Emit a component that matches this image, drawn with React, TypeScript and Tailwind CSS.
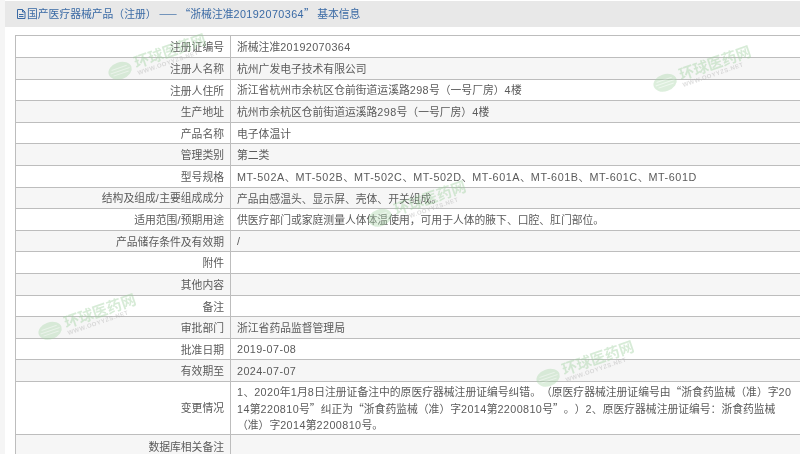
import React from "react";

function Mixed({ text }: { text: string }) {
  const parts = text.split(/([A-Za-z0-9\-\/]+)/);
  const wide = text.startsWith("MT-");
  return (
    <>
      {parts.map((p, i) =>
        i % 2 === 1 ? (
          <span
            key={i}
            className={
              wide
                ? "font-['Liberation_Sans',sans-serif] tracking-[0.56px]"
                : "font-['Liberation_Sans',sans-serif] tracking-[0.4px]"
            }
          >
            {p}
          </span>
        ) : (
          <span key={i}>{p}</span>
        ),
      )}
    </>
  );
}

const data: [string, string[], string][] = [
  ["注册证编号", ["浙械注准20192070364"], "h-[22px]"],
  ["注册人名称", ["杭州广发电子技术有限公司"], "h-[22px]"],
  ["注册人住所", ["浙江省杭州市余杭区仓前街道运溪路298号（一号厂房）4楼"], "h-[21px]"],
  ["生产地址", ["杭州市余杭区仓前街道运溪路298号（一号厂房）4楼"], "h-[22px]"],
  ["产品名称", ["电子体温计"], "h-[21px]"],
  ["管理类别", ["第二类"], "h-[22px]"],
  ["型号规格", ["MT-502A、MT-502B、MT-502C、MT-502D、MT-601A、MT-601B、MT-601C、MT-601D"], "h-[22px]"],
  ["结构及组成/主要组成成分", ["产品由感温头、显示屏、壳体、开关组成。"], "h-[21px]"],
  ["适用范围/预期用途", ["供医疗部门或家庭测量人体体温使用，可用于人体的腋下、口腔、肛门部位。"], "h-[22px]"],
  ["产品储存条件及有效期", ["/"], "h-[21px]"],
  ["附件", [], "h-[22px]"],
  ["其他内容", [], "h-[22px]"],
  ["备注", [], "h-[21px]"],
  ["审批部门", ["浙江省药品监督管理局"], "h-[22px]"],
  ["批准日期", ["2019-07-08"], "h-[21px]"],
  ["有效期至", ["2024-07-07"], "h-[22px]"],
  [
    "变更情况",
    [
      "1、2020年1月8日注册证备注中的原医疗器械注册证编号纠错。（原医疗器械注册证编号由“浙食药监械（准）字20",
      "14第220810号”纠正为“浙食药监械（准）字2014第2200810号”。）2、原医疗器械注册证编号：浙食药监械",
      "（准）字2014第2200810号。",
    ],
    "h-[52px]",
  ],
  ["数据库相关备注", [], "h-[24px]"],
];

function Watermark({ className }: { className: string }) {
  return (
    <div className={`absolute pointer-events-none flex items-center gap-[3px] -rotate-[19deg] opacity-40 ${className}`}>
      <svg width="26" height="20" viewBox="0 0 26 20">
        <ellipse cx="13" cy="10" rx="12" ry="8.5" fill="#a9d6a9" />
        <path d="M5 7 H21 M3 10 H23 M5 13 H21" stroke="#d8eed8" strokeWidth="1" />
      </svg>
      <div className="flex flex-col leading-none text-[#9ccf9c]">
        <span className="text-[15px] font-bold leading-[16px]">环球医药网</span>
        <span className="text-[6px] font-bold tracking-[0.5px] text-[#aaa] font-['Liberation_Sans',sans-serif]">WWW.OOYYZS.NET</span>
      </div>
    </div>
  );
}

export default function App() {
  return (
    <div className="relative w-[800px] h-[454px] overflow-hidden bg-[#f5f5f5] font-['Noto_Sans_CJK_SC','Noto_Sans',sans-serif] text-[10.8px] text-[#5a5a5a] blur-[0.3px] [text-spacing-trim:space-all] [text-autospace:no-autospace]">
      <div className="ml-[5px] h-full bg-white pt-px">
        <div className="h-[26px] bg-[#e8e8e8] flex items-center pl-[10px] text-[#3a6aa5]">
          <svg width="12" height="12" viewBox="0 0 12 12" className="shrink-0" fill="none" stroke="#3a6aa5" strokeWidth="1">
            <path d="M2.5 1.5 H7.5 L10 4 V10.5 H2.5 Z M7.5 1.5 V4 H10 M4 6.5 H8.5 M4 8.5 H8.5" />
          </svg>
          <span className="whitespace-pre">
            <Mixed text="国产医疗器械产品（注册） —— “浙械注准20192070364” 基本信息" />
          </span>
        </div>
        <div className="pl-[10px] pt-2">
          <table className="w-[790px] table-fixed border-collapse">
            <colgroup>
              <col className="w-[215px]" />
              <col />
            </colgroup>
            <tbody>
              {data.map(([label, value, h], i) => (
                <tr key={label} className={`${h} ${i % 2 === 0 ? "bg-white" : "bg-[#f6f6f6]"}`}>
                  <td className="border border-[#bdbdbd] text-right pr-[6px] leading-[15px] p-0">
                    <Mixed text={label} />
                  </td>
                  <td
                    className={
                      value.length > 1
                        ? "border border-[#bdbdbd] pl-[6px] pt-[2px] leading-[15.5px] whitespace-nowrap"
                        : "border border-[#bdbdbd] pl-[6px] leading-[15px] p-0 whitespace-nowrap"
                    }
                  >
                    {value.map((line) => (
                      <div key={line}>
                        <Mixed text={line} />
                      </div>
                    ))}
                  </td>
                </tr>
              ))}
            </tbody>
          </table>
        </div>
      </div>
      <Watermark className="left-[105px] top-[47px]" />
      <Watermark className="left-[650px] top-[59px]" />
      <Watermark className="left-[365px] top-[194px]" />
      <Watermark className="left-[35px] top-[307px]" />
      <Watermark className="left-[533px] top-[354px]" />
    </div>
  );
}
